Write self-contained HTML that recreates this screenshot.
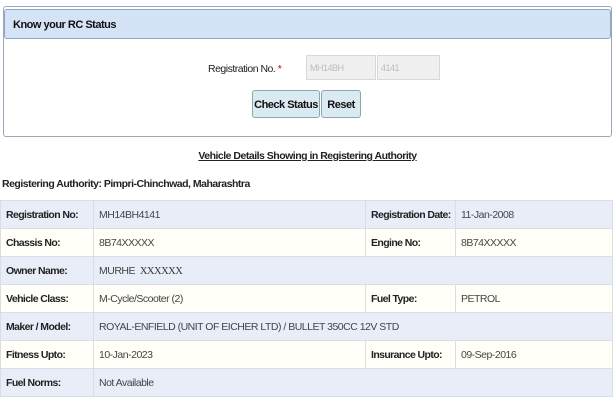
<!DOCTYPE html>
<html><head><style>
*{margin:0;padding:0;box-sizing:border-box}
body{width:615px;height:400px;background:#fff;font-family:"Liberation Sans",sans-serif;font-size:11px;letter-spacing:-0.5px;white-space:nowrap;color:#222;position:relative;overflow:hidden}
.a{position:absolute}
.panel{left:3px;top:6px;width:609px;height:131px;border:1px solid #9aa9b8;border-radius:3px;background:#fff}
.hdr{left:4px;top:9px;width:607px;height:30px;background:#d4e3f5;border:1px solid #8fa6c4;border-radius:3px;font-weight:bold;padding:9px 0 0 8px;font-size:11px;color:#111}
.inp{background:#f0f0f0;border:1px solid #d8d8d8;color:#bbb;font-size:9px;padding:7px 0 0 3px;height:25px;top:55px}
.btn{top:90px;height:28px;background:#dbe9f1;border:1px solid #8aa;border-radius:3px;font-weight:bold;font-size:11px;text-align:center;padding-top:8px;color:#111}
table{position:absolute;left:0;top:200px;width:613px;border-collapse:collapse;table-layout:fixed}
td{height:28px;border:1px solid #d8dde6;padding:0 5px;font-size:10.5px;color:#444;overflow:hidden}
td.l{font-weight:bold;color:#222;letter-spacing:-0.6px}
tr.o td{background:#e9edf8}
tr.e td{background:#fffff8}
</style></head><body>
<div class="a panel"></div>
<div class="a hdr">Know your RC Status</div>
<div class="a" style="left:208px;top:63px;font-size:10.5px">Registration No. <span style="color:#c00">*</span></div>
<div class="a inp" style="left:306px;width:70px">MH14BH</div>
<div class="a inp" style="left:377px;width:63px">4141</div>
<div class="a btn" style="left:252px;width:68px">Check Status</div>
<div class="a btn" style="left:321px;width:40px">Reset</div>
<div class="a" style="left:0;width:615px;top:150px;text-align:center;font-weight:bold;text-decoration:underline;font-size:10.5px">Vehicle Details Showing in Registering Authority</div>
<div class="a" style="left:2px;top:178px;font-weight:bold;font-size:10.5px">Registering Authority: Pimpri-Chinchwad, Maharashtra</div>
<table>
<colgroup><col style="width:93px"><col style="width:272px"><col style="width:90px"><col></colgroup>
<tr class="o"><td class="l">Registration No:</td><td>MH14BH4141</td><td class="l">Registration Date:</td><td>11-Jan-2008</td></tr>
<tr class="e"><td class="l">Chassis No:</td><td>8B74XXXXX</td><td class="l">Engine No:</td><td>8B74XXXXX</td></tr>
<tr class="o"><td class="l">Owner Name:</td><td colspan="3">MURHE &nbsp;<span style="font-family:'Liberation Serif',serif;color:#333">XXXXXX</span></td></tr>
<tr class="e"><td class="l">Vehicle Class:</td><td>M-Cycle/Scooter (2)</td><td class="l">Fuel Type:</td><td>PETROL</td></tr>
<tr class="o"><td class="l">Maker / Model:</td><td colspan="3">ROYAL-ENFIELD (UNIT OF EICHER LTD) / BULLET 350CC 12V STD</td></tr>
<tr class="e"><td class="l">Fitness Upto:</td><td>10-Jan-2023</td><td class="l">Insurance Upto:</td><td>09-Sep-2016</td></tr>
<tr class="o"><td class="l">Fuel Norms:</td><td colspan="3">Not Available</td></tr>
</table>
</body></html>
